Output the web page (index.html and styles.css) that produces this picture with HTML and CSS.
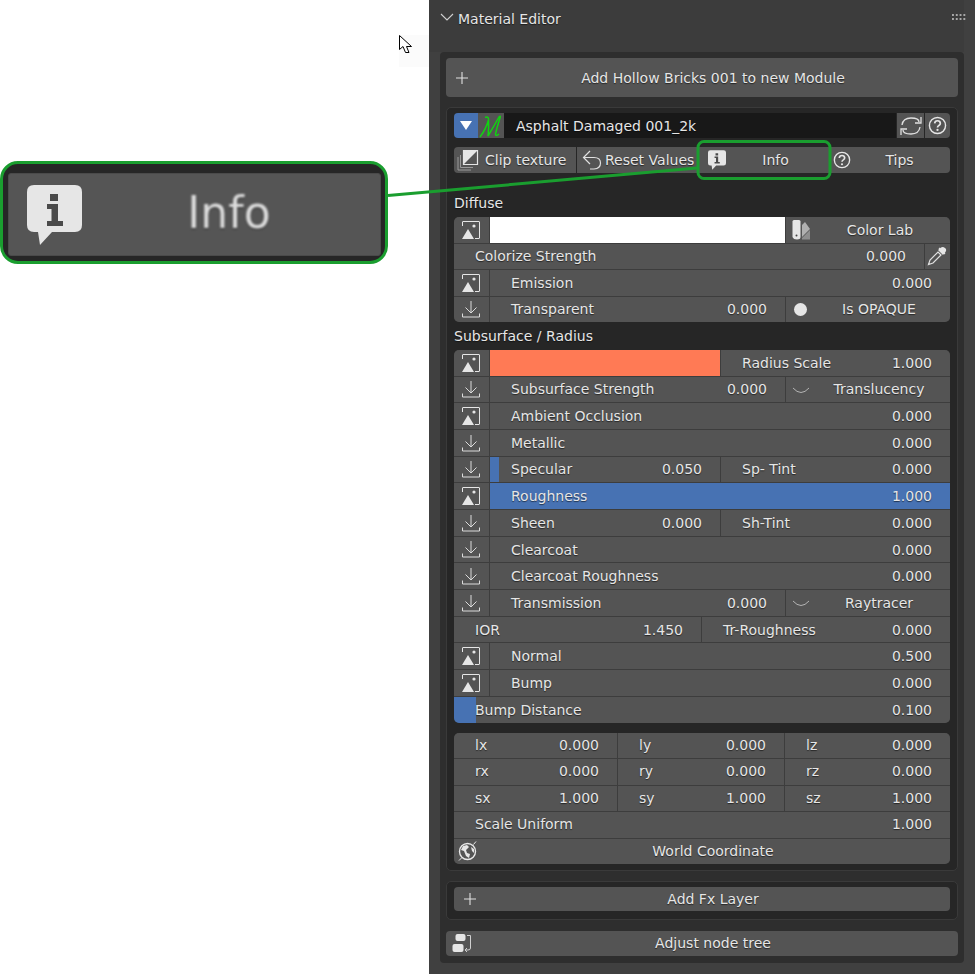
FILE: index.html
```html
<!DOCTYPE html>
<html lang="en">
<head>
<meta charset="utf-8">
<title>Material Editor</title>
<link rel="stylesheet" href="styles.css">
</head>
<body>
<svg class="defs" width="0" height="0" aria-hidden="true">
  <symbol id="i-img" viewBox="0 0 18 18">
    <path d="M.5 5V1Q.5 .5 1 .5H17Q17.500 .5 17.500 1V17Q17.500 17.500 17 17.500H13" fill="none" stroke="#e6e6e6" stroke-width="1"/>
    <path d="M0 18L6 8L12 18Z" fill="#e6e6e6"/>
    <circle cx="12" cy="5" r="1.600" fill="#e6e6e6"/>
  </symbol>
  <symbol id="i-down" viewBox="0 0 18 18">
    <path d="M9 1V13M3.500 7.500L9 13L14.500 7.500M.5 13.500V17H17.500V13.500" fill="none" stroke="#dcdcdc" stroke-width="1"/>
  </symbol>
  <symbol id="i-arc" viewBox="0 0 18 8">
    <path d="M1 1Q9 10 17 1" fill="none" stroke="#b4b4b4" stroke-width="1"/>
  </symbol>
  <symbol id="i-plus" viewBox="0 0 14 14">
    <path d="M7 1V13M1 7H13" stroke="#e0e0e0" stroke-width="1.100"/>
  </symbol>
  <symbol id="i-help" viewBox="0 0 20 20">
    <circle cx="10" cy="10" r="8.500" fill="none" stroke="#e6e6e6" stroke-width="1.500"/>
    <path d="M7 7.800Q7.200 5 10 5T13 7.600Q13 9 11.500 9.900T10 12" fill="none" stroke="#e6e6e6" stroke-width="1.800"/>
    <circle cx="10" cy="14.700" r="1.200" fill="#e6e6e6"/>
  </symbol>
  <symbol id="i-info" viewBox="0 0 55 60">
    <path d="M7 0H48Q55 0 55 7V40Q55 47 48 47H25L13 60L11 47H7Q0 47 0 40V7Q0 0 7 0Z" fill="#e6e6e6"/>
    <path d="M23 9h8v7h-8zM20 19h11v17h5v5H20v-5h4.500V24H20z" fill="#4a4a4a"/>
  </symbol>
</svg>

<main class="page">
  <section class="canvas">
    <div class="cursor-box">
      <svg class="cursor" width="15" height="20" viewBox="0 0 15 20">
        <path d="M.5 .5V14.500L4 11.500L6.500 17.500H10L7.500 11.500H12.500Z" fill="#fff" stroke="#000" stroke-width="1"/>
      </svg>
    </div>
  </section>

  <section class="panel">
    <header class="panel-head">
      <svg class="chev" width="14" height="8" viewBox="0 0 14 8"><path d="M1 1L7 7L13 1" fill="none" stroke="#d0d0d0" stroke-width="1.100"/></svg>
      <span class="panel-title">Material Editor</span>
      <span class="grip"></span>
    </header>

    <div class="box">
      <div class="btn btn-tall"><svg class="lead lead-plus" width="14" height="14"><use href="#i-plus"/></svg><span class="btn-text">Add Hollow Bricks 001 to new Module</span></div>

      <div class="sub">
        <div class="top-row">
          <div class="toggle"><svg width="12" height="9" viewBox="0 0 12 9"><path d="M0 0H12L6 9Z" fill="#fff"/></svg></div>
          <div class="mat"><svg width="24" height="24" viewBox="0 0 24 24"><path d="M1 23Q7 15 9.500 6Q10 2 6 3.500M9.500 6Q10 14 9 22Q15 12 20 3Q22 1 21 4Q18 13 16.500 20Q16.500 23 20 20" fill="none" stroke="#10d510" stroke-width="1.500"/></svg></div>
          <div class="field">Asphalt Damaged 001_2k</div>
          <div class="top-ic ic-refresh"><svg width="22" height="22" viewBox="0 0 22 22"><path d="M2 10Q3 3 11 3T19 7M21 2V8H15M20 12Q19 19 11 19T3 15M1 20V14H7" fill="none" stroke="#e0e0e0" stroke-width="1.300"/></svg></div>
          <div class="top-ic ic-q"><svg width="19" height="19"><use href="#i-help"/></svg></div>
        </div>

        <div class="tool-row">
          <div class="tool t-clip">
            <svg width="22" height="22" viewBox="0 0 22 22"><path d="M1 8V21H14M3.500 6V18.500H16" fill="none" stroke="#9a9a9a" stroke-width="1"/><path d="M6.500 1.500H20.500V15.500H6.500Z" fill="none" stroke="#e6e6e6" stroke-width="1.200"/><path d="M6.500 15.500V1.500H20.500Z" fill="#e6e6e6"/></svg>
            <span>Clip texture</span>
          </div>
          <div class="tool t-reset">
            <svg width="20" height="20" viewBox="0 0 20 20"><path d="M8 1L1.500 7.500L8 14M2 7.500H12Q18.500 7.500 18.500 13T12 19H8" fill="none" stroke="#e0e0e0" stroke-width="1.200"/></svg>
            <span>Reset Values</span>
          </div>
          <div class="tool t-info">
            <svg width="18" height="20"><use href="#i-info"/></svg>
            <span class="grow">Info</span>
          </div>
          <div class="tool t-tips">
            <svg width="18" height="18"><use href="#i-help"/></svg>
            <span class="grow">Tips</span>
          </div>
        </div>

        <div class="sec-label sec-first">Diffuse</div>
        <div class="rows rows-a">
          <div class="row">
            <div class="ic"><svg width="18" height="18"><use href="#i-img"/></svg></div>
            <div class="swatch white"></div>
            <div class="c side">
              <svg class="side-ic" width="19" height="20" viewBox="0 0 19 20"><path d="M2 0H7Q8.500 0 8.500 1.500V17Q8.500 19.500 5 19.500T.5 17V1.500Q.5 0 2 0Z" fill="#e6e6e6"/><circle cx="4.500" cy="15.500" r="1" fill="#444"/><path d="M10 5L13 2L18 9L10 17Z" fill="#b0b0b0"/><path d="M10 19.500V18L18 10V19.500Z" fill="#8e8e8e"/></svg>
              <span class="grow">Color Lab</span>
            </div>
          </div>
          <div class="row">
            <div class="c lbl"><span>Colorize Strength</span><span>0.000</span></div>
            <div class="ic eye"><svg width="20" height="20" viewBox="0 0 20 20"><path d="M12 2L18 8M1.500 18.500L3 14L11 6L14 9L6 17Z" fill="none" stroke="#e0e0e0" stroke-width="1.200"/><path d="M11 4L14 1.500Q16 .5 18 2T18.500 6L16 9Z" fill="#e6e6e6"/></svg></div>
          </div>
          <div class="row">
            <div class="ic"><svg width="18" height="18"><use href="#i-img"/></svg></div>
            <div class="c"><span>Emission</span><span>0.000</span></div>
          </div>
          <div class="row">
            <div class="ic"><svg width="18" height="18"><use href="#i-down"/></svg></div>
            <div class="c w295"><span>Transparent</span><span>0.000</span></div>
            <div class="c side">
              <span class="dot"></span>
              <span class="grow">Is OPAQUE</span>
            </div>
          </div>
        </div>

        <div class="sec-label">Subsurface / Radius</div>
        <div class="rows rows-b">
          <div class="row">
            <div class="ic"><svg width="18" height="18"><use href="#i-img"/></svg></div>
            <div class="swatch coral"></div>
            <div class="c"><span>Radius Scale</span><span>1.000</span></div>
          </div>
          <div class="row">
            <div class="ic"><svg width="18" height="18"><use href="#i-down"/></svg></div>
            <div class="c w295"><span>Subsurface Strength</span><span>0.000</span></div>
            <div class="c side"><svg class="side-ic arc" width="18" height="8"><use href="#i-arc"/></svg><span class="grow">Translucency</span></div>
          </div>
          <div class="row">
            <div class="ic"><svg width="18" height="18"><use href="#i-img"/></svg></div>
            <div class="c"><span>Ambient Occlusion</span><span>0.000</span></div>
          </div>
          <div class="row">
            <div class="ic"><svg width="18" height="18"><use href="#i-down"/></svg></div>
            <div class="c"><span>Metallic</span><span>0.000</span></div>
          </div>
          <div class="row">
            <div class="ic"><svg width="18" height="18"><use href="#i-down"/></svg></div>
            <div class="c w230 fill-spec"><span>Specular</span><span>0.050</span></div>
            <div class="c"><span>Sp- Tint</span><span>0.000</span></div>
          </div>
          <div class="row">
            <div class="ic"><svg width="18" height="18"><use href="#i-img"/></svg></div>
            <div class="c fill-full"><span>Roughness</span><span>1.000</span></div>
          </div>
          <div class="row">
            <div class="ic"><svg width="18" height="18"><use href="#i-down"/></svg></div>
            <div class="c w230"><span>Sheen</span><span>0.000</span></div>
            <div class="c"><span>Sh-Tint</span><span>0.000</span></div>
          </div>
          <div class="row low">
            <div class="ic"><svg width="18" height="18"><use href="#i-down"/></svg></div>
            <div class="c"><span>Clearcoat</span><span>0.000</span></div>
          </div>
          <div class="row">
            <div class="ic"><svg width="18" height="18"><use href="#i-down"/></svg></div>
            <div class="c"><span>Clearcoat Roughness</span><span>0.000</span></div>
          </div>
          <div class="row">
            <div class="ic"><svg width="18" height="18"><use href="#i-down"/></svg></div>
            <div class="c w295"><span>Transmission</span><span>0.000</span></div>
            <div class="c side"><svg class="side-ic arc" width="18" height="8"><use href="#i-arc"/></svg><span class="grow">Raytracer</span></div>
          </div>
          <div class="row low">
            <div class="c lbl w247"><span>IOR</span><span>1.450</span></div>
            <div class="c lbl"><span>Tr-Roughness</span><span>0.000</span></div>
          </div>
          <div class="row">
            <div class="ic"><svg width="18" height="18"><use href="#i-img"/></svg></div>
            <div class="c"><span>Normal</span><span>0.500</span></div>
          </div>
          <div class="row">
            <div class="ic"><svg width="18" height="18"><use href="#i-img"/></svg></div>
            <div class="c"><span>Bump</span><span>0.000</span></div>
          </div>
          <div class="row row-end">
            <div class="c lbl fill-bump"><span>Bump Distance</span><span>0.100</span></div>
          </div>
        </div>

        <div class="rows rows-c">
          <div class="row">
            <div class="c lbl w163"><span>lx</span><span>0.000</span></div>
            <div class="c lbl w166"><span>ly</span><span>0.000</span></div>
            <div class="c lbl"><span>lz</span><span>0.000</span></div>
          </div>
          <div class="row high">
            <div class="c lbl w163"><span>rx</span><span>0.000</span></div>
            <div class="c lbl w166"><span>ry</span><span>0.000</span></div>
            <div class="c lbl"><span>rz</span><span>0.000</span></div>
          </div>
          <div class="row">
            <div class="c lbl w163"><span>sx</span><span>1.000</span></div>
            <div class="c lbl w166"><span>sy</span><span>1.000</span></div>
            <div class="c lbl"><span>sz</span><span>1.000</span></div>
          </div>
          <div class="row">
            <div class="c lbl"><span>Scale Uniform</span><span>1.000</span></div>
          </div>
          <div class="row">
            <div class="c wide">
              <svg class="globe" width="20" height="20" viewBox="0 0 20 20"><circle cx="9.500" cy="10.500" r="8" fill="none" stroke="#e6e6e6" stroke-width="1.400"/><path d="M5 5L9 4L11 6L8 9L9 12L12 13L11 17L8 15L6 10L3 9Z M13 6L16 8L16 12L14 10Z" fill="#e6e6e6"/><path d="M18 .5L15.500 3.500M1 19.500L3.500 17" stroke="#e6e6e6" stroke-width="1"/></svg>
              <span class="btn-text">World Coordinate</span>
            </div>
          </div>
        </div>
      </div>

      <div class="sub sub-fx">
        <div class="btn btn-fx"><svg class="lead lead-plus" width="14" height="14"><use href="#i-plus"/></svg><span class="btn-text">Add Fx Layer</span></div>
      </div>

      <div class="btn btn-adjust">
        <svg class="lead" width="20" height="20" viewBox="0 0 20 20"><rect x="3.500" y="1" width="10" height="7" rx="2" fill="#e6e6e6"/><rect x=".5" y="11" width="11" height="8" rx="2" fill="#e6e6e6"/><path d="M15 2.500H18.500V15Q18.500 17 16 17H13.500M15 15L13 17L15 19" fill="none" stroke="#d0d0d0" stroke-width="1"/></svg>
        <span class="btn-text">Adjust node tree</span>
      </div>
    </div>
  </section>

  <svg class="overlay" width="975" height="974" viewBox="0 0 975 974" aria-hidden="true">
    <path d="M388 195.500L697 168" stroke="#1a9e2f" stroke-width="3" fill="none"/>
    <rect x="698" y="141.500" width="132" height="37" rx="6" fill="none" stroke="#1a9e2f" stroke-width="3"/>
  </svg>

  <div class="callout">
    <div class="callout-btn">
      <svg class="callout-ic" width="55" height="60"><use href="#i-info"/></svg>
      <span class="callout-text">Info</span>
    </div>
  </div>
</main>
</body>
</html>
```

FILE: styles.css
```css
* { box-sizing: border-box; }
html, body { margin: 0; padding: 0; }
body { background: #fff; font-family: "DejaVu Sans", sans-serif; font-size: 14px; color: #e6e6e6; }
.defs { position: absolute; }
.page { position: relative; display: flex; width: 975px; height: 974px; overflow: hidden; }
span, .field, .sec-label { text-shadow: 0 1px 1px rgba(0,0,0,.55); white-space: nowrap; }

/* left canvas */
.canvas { width: 429px; flex: none; background: #fff; padding: 35px 0 0 399px; }
.cursor-box { width: 30px; height: 32px; background: #fbfbfb; }
.cursor { display: block; }

/* right panel */
.panel { flex: 1; background: #404040; display: flex; flex-direction: column; }
.panel-head { height: 52px; width: 535px; flex: none; display: flex; align-items: center; padding: 0 0 16px 11px; background: #3c3c3c; }
.chev { flex: none; margin-right: 4px; margin-top: -2px; }
.panel-title { flex: 1; color: #e6e6e6; font-size: 14px; padding-top: 1px; }
.grip { width: 15px; height: 7px; background-image: radial-gradient(circle at 1px 1px, #a8a8a8 1px, transparent 1.2px); background-size: 3.800px 4px; margin: -1px -3px 0 0; }

.box { margin: 0 11px; width: 524px; height: 911px; background: #2e2e2e; border-radius: 4px; padding: 6px; display: flex; flex-direction: column; }

.btn { background: #545454; border-radius: 4px; display: flex; align-items: center; flex: none; }
.btn-tall { height: 39px; }
.btn-adjust { height: 25px; margin-top: 11px; padding-bottom: 1px; }
.btn-fx { height: 24px; }
.lead { flex: none; display: block; }
.lead-plus { margin-left: 9px; margin-right: -1px; }
.btn-adjust .lead { margin-left: 6px; margin-right: -4px; }
.btn-text { flex: 1; text-align: center; }

.sub { height: 764px; margin-top: 10px; background: #262626; border: 1px solid #3a3a3a; border-radius: 5px; padding: 5px 7px 0; flex: none; }
.sub-fx { height: 39px; padding-top: 5px; }

.top-row { display: flex; height: 25px; gap: 1px; }
.toggle { width: 24px; background: #4772b3; border-radius: 4px 0 0 4px; display: flex; align-items: center; justify-content: center; }
.mat { width: 26px; background: #545454; display: flex; align-items: center; justify-content: center; margin-left: -1px; }
.field { flex: 1; background: #181818; padding-left: 12px; line-height: 26px; margin-left: -1px; }
.top-ic { background: #545454; display: flex; align-items: center; justify-content: center; }
.ic-refresh { width: 27px; }
.ic-q { width: 25px; border-radius: 0 4px 4px 0; }

.tool-row { display: flex; height: 26px; gap: 1px; margin-top: 9px; }
.tool { background: #545454; display: flex; align-items: center; }
.t-clip { width: 122px; padding-left: 3px; gap: 6px; border-radius: 4px 0 0 4px; }
.t-reset { width: 120px; padding-left: 5px; gap: 3px; }
.t-info { width: 131px; padding: 0 4px 0 10px; }
.t-tips { width: 120px; padding: 0 2px 0 3px; border-radius: 0 4px 4px 0; }
.grow { flex: 1; text-align: center; }

.sec-label { height: 28px; line-height: 28px; color: #e6e6e6; }
.sec-first { height: 30px; line-height: 32px; margin-top: 14px; }

.rows { display: flex; flex-direction: column; gap: 1px; background: #3d3d3d; border-radius: 5px; overflow: hidden; }
.rows-a { height: 105px; }
.rows-b { height: 373px; }
.rows-c { height: 131px; margin-top: 10px; }
.rows-c .lbl { padding-bottom: 1px; }
.row { flex: 1; display: flex; gap: 1px; min-height: 0; }
.row-end { flex: 0 0 26.5px; }
.low .c { padding-top: 1px; }
.rows-c .high .lbl { padding-bottom: 2px; }

.ic { width: 35px; flex: none; background: #545454; display: flex; align-items: center; justify-content: center; padding-right: 1px; }
.ic svg { display: block; }
.eye { width: 25px; }

.c { flex: 1; min-width: 0; background: #545454; display: flex; align-items: center; justify-content: space-between; padding: 0 18px 0 21px; }
.c.side { padding: 0 1px 0 6px; }
.side-ic { flex: none; display: block; }
.arc { margin: 3px -1px 0 0; }
.dot { width: 13px; height: 13px; background: #e6e6e6; border-radius: 50%; flex: none; margin: 0 2px; text-shadow: none; }
.c.wide { padding: 0; }
.globe { flex: none; margin-left: 4px; margin-right: -2px; display: block; }

.w295 { flex: 0 0 295px; }
.w230 { flex: 0 0 230px; }
.w247 { flex: 0 0 247px; }
.w163 { flex: 0 0 163px; }
.w166 { flex: 0 0 166px; }

.swatch { flex: 0 0 295px; }
.white { background: #fff; }
.coral { background: #ff7a55; flex-basis: 230px; }
.fill-spec { background: linear-gradient(to right, #4772b3 9px, #545454 9px); }
.fill-full { background: #4772b3; }
.fill-bump { background: linear-gradient(to right, #4772b3 22px, #545454 22px); }

/* callout over the page */
.overlay { position: absolute; left: 0; top: 0; pointer-events: none; }
.callout { position: absolute; left: 0; top: 161px; width: 388px; height: 103px; background: #262626; border: 3.500px solid #1a9e2f; border-radius: 18px; padding: 9px 4px 5px 5px; overflow: hidden; }
.callout-btn { height: 100%; background: #555; border: 1px solid #4a4a4a; border-radius: 3px; display: flex; align-items: center; padding: 0 0 0 18px; position: relative; }
.callout-ic { flex: none; display: block; filter: blur(.6px); }
.callout-text { position: absolute; left: 220px; top: 50%; transform: translate(-50%, -54%); font-size: 44px; color: #dcdcdc; filter: blur(.8px); }
```
